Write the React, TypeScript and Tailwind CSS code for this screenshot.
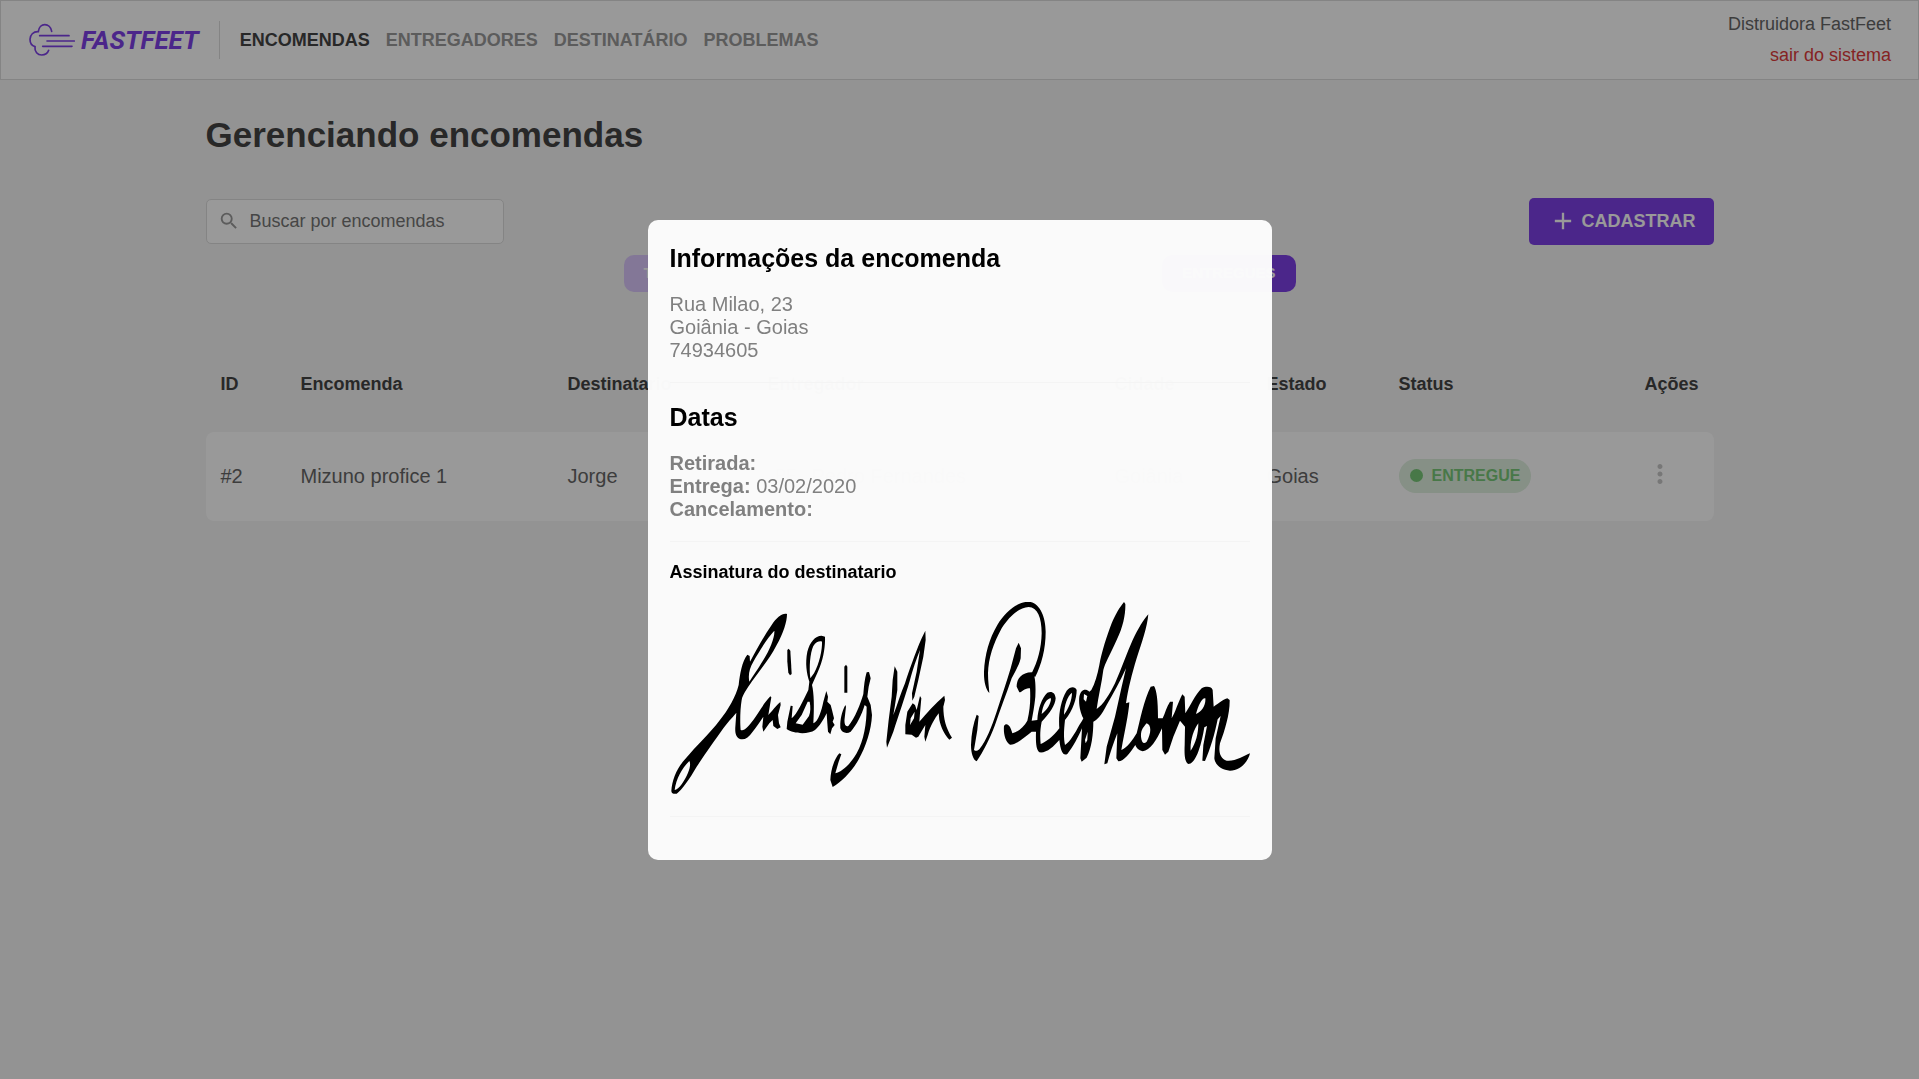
import { MdAdd, MdMoreVert, MdSearch } from "react-icons/md";

const navItems = [
  { label: "ENCOMENDAS", active: true },
  { label: "ENTREGADORES", active: false },
  { label: "DESTINATÁRIO", active: false },
  { label: "PROBLEMAS", active: false },
];

function Logo() {
  return (
    <a href="#" aria-label="FastFeet" className="flex items-center gap-[6px] text-[#7d40e7]">
      <svg viewBox="86 70 138 100" className="h-[34px] w-[46px]" fill="none" stroke="currentColor" strokeWidth="5" strokeLinecap="round" aria-hidden="true">
        <path d="M154 94C150 68 117 66 114 95C99 94 89 105 89 118C89 130 96 138 104 140C102 155 112 165 124 165C134 165 142 160 145 151" />
        <path d="M118 107H206M140 123H222M127 139H215" />
      </svg>
      <span className="font-[Roboto,sans-serif] text-[26px] leading-8 font-bold italic">FASTFEET</span>
    </a>
  );
}

function Header() {
  return (
    <header className="flex h-20 items-center justify-between border border-[#ddd] bg-white pr-[27px] pl-7">
      <div className="flex items-center">
        <Logo />
        <nav className="ml-5 flex h-[38px] items-center gap-4 border-l border-[#ddd] pl-5 text-lg font-bold">
          {navItems.map((item) => (
            <a key={item.label} href="#" className={item.active ? "text-[#444]" : "text-[#999]"}>
              {item.label}
            </a>
          ))}
        </nav>
      </div>
      <div className="flex flex-col items-end gap-[10px] text-lg leading-[21px]">
        <span className="text-[#666]">Distruidora FastFeet</span>
        <a href="#" className="text-[#de3b3b]">sair do sistema</a>
      </div>
    </header>
  );
}

function OrdersTable() {
  return (
    <table className="mt-[70px] w-full table-fixed border-separate border-spacing-0 text-left">
      <colgroup>
        <col className="w-20" />
        <col className="w-[267px]" />
        <col className="w-[200px]" />
        <col className="w-[347px]" />
        <col className="w-[152px]" />
        <col className="w-[132px]" />
        <col className="w-[200px]" />
        <col />
      </colgroup>
      <thead>
        <tr className="text-lg leading-[22px] text-[#444] [&>th]:px-[15px] [&>th]:pt-[11px] [&>th]:pb-[37px]">
          <th>ID</th>
          <th>Encomenda</th>
          <th>Destinatario</th>
          <th>Entregador</th>
          <th>Cidade</th>
          <th>Estado</th>
          <th>Status</th>
          <th className="text-right">Ações</th>
        </tr>
      </thead>
      <tbody>
        <tr className="text-xl text-[#666] [&>td]:h-[89px] [&>td]:bg-white [&>td]:px-[15px] [&>td]:pb-[2px]">
          <td className="rounded-l-lg">#2</td>
          <td>Mizuno profice 1</td>
          <td>Jorge</td>
          <td>
            <div className="flex items-center gap-2">
              <span className="flex size-9 items-center justify-center rounded-full bg-[#eee] text-base">PF</span>
              Pedro Fernandes
            </div>
          </td>
          <td>Goiânia</td>
          <td>Goias</td>
          <td>
            <span className="inline-flex h-[34px] items-center gap-[9px] rounded-full bg-[#dff0df] px-[11px] text-base font-bold text-[#78c878]">
              <span className="size-[13px] rounded-full bg-[#78c878]" />
              ENTREGUE
            </span>
          </td>
          <td className="rounded-r-lg">
            <button type="button" aria-label="Ações da encomenda" className="mr-6 mb-1 ml-auto block text-[#c6c6c6]">
              <MdMoreVert size={30} />
            </button>
          </td>
        </tr>
      </tbody>
    </table>
  );
}

function Signature() {
  return (
    <svg viewBox="0 0 1740 582" className="mt-5 h-auto w-full" role="img" aria-label="Assinatura" fillRule="evenodd">
      <g transform="translate(-30 -36)">
        <path d="M34 603C36 570 50 535 75 508C110 465 150 430 178 392C205 360 228 318 236 285C240 250 246 215 262 194L269 198L270 215C290 180 310 140 335 105C350 82 368 68 381 72C381 95 370 130 350 165C330 205 300 240 275 275C262 295 248 312 245 330C240 360 240 400 242 420C252 425 265 410 280 390C295 368 315 335 331 319L334 322L330 345L325 375C335 365 350 345 361 336L362 345L354 375L357 400L362 412L352 417L340 408L338 390L328 400L310 425L307 410L310 380C300 395 290 410 278 425C265 445 250 452 238 446C226 440 225 425 226 410L229 368C215 385 200 400 190 415C165 450 130 500 110 530C90 565 65 600 50 611C42 613 34 610 34 603ZM268 275C264 255 268 235 280 215C300 180 325 140 343 122C345 140 330 180 310 210C295 235 278 260 268 275ZM44 600C48 565 70 530 88 513C95 525 85 555 65 583C58 593 50 600 44 600Z" />
        <path d="M382 180L386 176L391 182L393 215L395 252L390 256L385 248L382 215Z" />
        <path d="M448 275C440 250 435 220 442 185C450 155 465 138 485 137L495 140C496 165 492 200 478 235C470 255 462 270 456 285C462 310 463 350 460 400C475 395 485 360 490 335L499 303L504 320L502 335L512 345L516 360L522 385L518 395L524 405L516 415L511 433L504 425L502 400L500 370C490 390 478 410 465 420C445 434 400 432 380 417L382 395L392 347L398 348L395 385C410 375 430 330 445 300ZM451 265C447 230 450 190 460 168C468 155 480 152 486 155C487 180 478 220 462 250ZM443 335L425 375L407 400L428 404L447 378C452 365 452 350 449 335Z" />
        <path d="M553 230L558 224L562 230L562 308L553 308Z" />
        <path d="M556 345L558 350L554 385C552 400 555 412 565 408C585 385 602 340 610 312C612 290 614 265 620 247L627 246L632 265L626 290L622 320L632 345L636 375C634 420 618 470 595 510C575 545 545 575 518 591L511 570C512 545 520 510 538 490L544 493L536 515L526 550C545 545 570 525 590 490C612 450 620 400 620 350L614 345C605 375 590 405 572 425C560 433 545 428 541 415C540 395 543 370 556 345Z" />
        <path d="M704 229L712 245L712 300L705 345L700 375C712 345 722 310 735 280C745 250 765 190 785 145L796 122L797 150L790 200L775 270L763 320L757 332L756 310L770 245L780 180C770 205 758 240 750 270C735 320 715 380 700 425L681 473L679 455L686 390L695 320L698 270Z" />
        <path d="M780 318L784 325L780 370L778 395C800 370 825 340 853 317L855 330L850 350C850 385 858 415 876 443L868 449C850 430 838 400 837 380L836 370C825 385 812 405 803 435L796 455L793 440L796 405L775 440L768 443L755 434L736 433L736 405L742 365L758 340L765 345L770 360ZM750 405L762 385L764 365L752 385Z" />
      </g>
      <g transform="translate(840 -36)">
        <path d="M118 309C108 300 101 275 102 245C104 195 118 145 142 105C166 64 202 36 236 35C268 38 287 78 287 125C287 178 274 225 255 262L245 250C263 215 274 175 275 130C275 82 262 52 236 51C208 52 178 78 155 115C130 160 115 205 114 250C114 275 117 292 118 309Z" />
        <path d="M206 158L213 175L212 205C208 225 195 245 185 265C170 310 150 360 135 405C120 445 100 485 80 514C70 510 63 490 63 465C64 430 70 400 80 374L86 378L82 420L72 480C78 485 84 482 88 478C110 450 125 410 140 365C155 320 170 275 182 235L198 175Z" />
        <path d="M200 290C200 265 215 248 245 247C255 250 258 280 256 320C253 350 248 375 245 392L262 390C264 355 275 325 292 308C305 302 316 308 317 325C316 345 300 370 275 395C270 420 270 440 272 462C285 458 310 440 328 415C325 380 330 335 350 302C360 290 375 288 380 300C380 325 370 360 345 390C342 420 340 440 345 465C360 455 375 430 388 405C395 395 398 390 400 385C392 370 385 345 388 320C392 300 405 293 418 305L424 300C435 280 442 255 448 225C455 185 470 140 485 100C495 75 510 50 522 36L526 42C527 70 520 110 500 150C480 195 465 220 460 240C455 280 445 320 440 357C460 345 480 310 495 280C515 235 530 190 548 150C565 115 580 90 595 73C592 110 575 160 560 205C545 255 535 295 528 340L538 337C536 370 525 420 514 480C530 475 548 450 560 430C570 390 582 330 602 290L612 288C620 300 624 330 624 385L638 385C645 370 650 350 660 335L669 335L665 385C675 370 685 335 697 313L704 320L706 370C720 350 735 315 755 295C770 287 785 290 788 300L791 350C800 345 815 330 832 325L839 330C840 370 825 420 810 460C805 485 810 505 830 512C855 515 880 498 900 490C895 515 870 542 840 542C815 540 795 525 793 505L797 445L812 378L803 388C795 430 780 480 765 513L757 512L760 465L771 408L763 412C756 455 740 522 715 522C703 515 703 490 704 465L705 410L690 392L670 440L655 485L645 494L637 480L636 415C620 450 600 482 578 484C565 480 560 475 556 465C540 490 520 515 505 514L499 505L502 430C490 460 480 490 472 520L463 523L470 470L495 380L515 290L528 235C510 275 490 310 470 345C455 375 440 392 430 395C430 430 425 475 410 503L395 515L391 505L396 415C385 440 370 470 352 492C340 499 332 485 328 450C310 470 290 490 268 487C258 480 257 455 258 425L245 425C225 440 200 465 180 464C165 455 160 430 162 408C168 398 180 402 187 430C205 425 222 410 232 392C240 360 242 330 240 295C225 292 215 308 208 307ZM275 372C278 345 290 325 303 325C303 342 290 362 275 372ZM342 374C343 345 352 318 366 308C366 330 355 357 342 374ZM402 312L412 318L408 335L401 328ZM573 440C572 420 580 412 590 400C605 405 604 430 590 455C582 463 575 460 573 440ZM738 372C745 345 757 322 766 325C768 345 755 365 738 372ZM722 482C720 455 730 420 745 400C745 430 738 460 722 482ZM405 450L413 425L412 450L407 460Z" />
      </g>
    </svg>
  );
}

function OrderModal() {
  return (
    <div className="fixed inset-0 flex items-center justify-center bg-black/40">
      <div role="dialog" aria-modal="true" aria-label="Informações da encomenda" className="w-[624px] max-w-full rounded-[10px] bg-[#fbfbfb]/99 px-[22px] pt-6 pb-[43px] text-xl leading-[23px] text-[#808080]">
        <section className="border-b border-[#f4f4f4] pb-5">
          <h2 className="mb-5 text-[25px] leading-[29px] font-bold text-black">Informações da encomenda</h2>
          <p>Rua Milao, 23</p>
          <p>Goiânia - Goias</p>
          <p>74934605</p>
        </section>
        <section className="border-b border-[#f4f4f4] py-5">
          <h2 className="mb-5 text-[25px] leading-[29px] font-bold text-black">Datas</h2>
          <p><strong>Retirada:</strong></p>
          <p><strong>Entrega:</strong> 03/02/2020</p>
          <p><strong>Cancelamento:</strong></p>
        </section>
        <section className="border-b border-[#f4f4f4] py-5">
          <h3 className="text-lg leading-5 font-bold text-black">Assinatura do destinatario</h3>
          <Signature />
        </section>
      </div>
    </div>
  );
}

export default function App() {
  return (
    <div className="min-h-screen bg-[#f5f5f5] font-['Liberation_Sans',Arial,sans-serif]">
      <Header />
      <main className="mx-auto w-full max-w-[1508px] pt-[35px]">
        <h1 className="text-[35px] leading-10 font-bold text-[#444]">Gerenciando encomendas</h1>
        <div className="mt-[43px] flex items-center justify-between">
          <label className="flex h-[45px] w-[298px] items-center gap-[10px] rounded-[5px] border border-[#ddd] bg-white pb-[2px] pl-[11px]">
            <MdSearch size={22} className="shrink-0 text-[#999]" />
            <input type="text" aria-label="Buscar por encomendas" placeholder="Buscar por encomendas" className="w-full min-w-0 bg-transparent text-lg outline-none placeholder:text-[#757575]" />
          </label>
          <button type="button" className="flex h-[47px] items-center gap-[5px] rounded-[5px] bg-[#7d40e7] pr-[18px] pb-[2px] pl-5 text-lg font-bold text-white">
            <MdAdd size={28} />
            CADASTRAR
          </button>
        </div>
        <div className="mx-auto mt-[10px] flex w-[672px] max-w-full justify-between text-[15px] font-bold text-white">
          <button type="button" disabled className="h-[37px] rounded-[10px] bg-[#dac7fc] px-5">TODAS</button>
          <button type="button" className="h-[37px] rounded-[10px] bg-[#7d40e7] px-5">ENTREGUES</button>
        </div>
        <OrdersTable />
      </main>
      <OrderModal />
    </div>
  );
}
